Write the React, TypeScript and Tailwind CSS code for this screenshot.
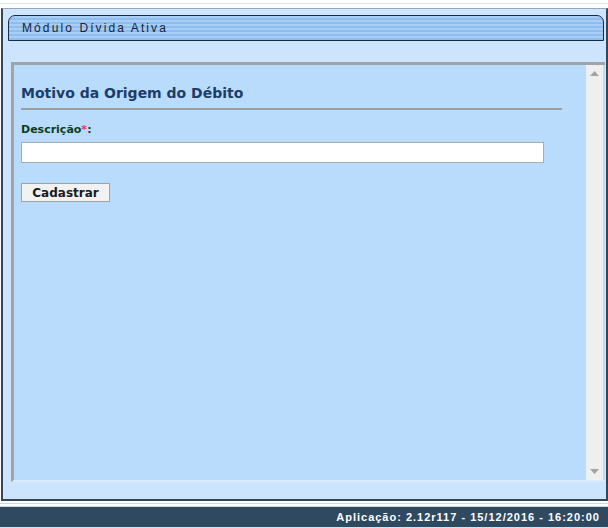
import React from 'react';

const stripes =
  'repeating-linear-gradient(to bottom, #a9cff6 0px, #a9cff6 2px, #8dbcef 2px, #8dbcef 4px)';

const App = () => {
  return (
    <div className="w-[608px] h-[528px] bg-white flex flex-col overflow-hidden font-['DejaVu_Sans',sans-serif]">
      <div className="h-[3px] bg-white" />
      <div className="h-[1px] bg-[#dbe6ee]" />
      <div className="h-[4px] bg-white" />

      {/* main frame */}
      <div className="h-[493px] ml-[1px] border-2 border-[#34475a] border-t-[#9aa7b3] border-t bg-[#cce4fc] flex flex-col">
        {/* module tab */}
        <div
          className="mt-[6px] ml-[5px] mr-[2px] h-[26px] border border-[#1a2a44] rounded-tl-[7px] rounded-tr-[7px] flex items-center pl-[13px]"
          style={{ background: stripes }}
        >
          <span className="text-[12px] tracking-[2.1px] text-[#17233b] font-['Liberation_Sans',sans-serif]">
            Módulo Dívida Ativa
          </span>
        </div>

        {/* content panel */}
        <div className="mt-[21px] ml-[8px] mr-[1px] h-[420px] flex border-t-[3px] border-l-[3px] border-[#9ea4aa] border-b-[2px] border-b-[#dcecfc] bg-[#b9dcfd]">
          <div className="flex-1 pl-[7px] pr-[24px] pt-[18px] flex flex-col">
            <h1 className="text-[14px] font-bold text-[#1c3d6a] leading-[20px]">
              Motivo da Origem do Débito
            </h1>
            <div className="mt-[5px] h-[2px] bg-[#9aa0a6]" />
            <label className="mt-[13px] text-[11px] font-bold text-[#0f3d1c] leading-[14px]">
              Descrição<span className="text-[#e5394a]">*</span>:
            </label>
            <input
              type="text"
              className="mt-[5px] w-[523px] h-[21px] bg-white border border-[#a6acb2] outline-none"
            />
            <button className="mt-[20px] w-[89px] h-[19px] bg-[#f2f2f2] border border-[#9da3a9] text-[12px] font-bold text-[#1b1b1b] leading-[16px]">
              Cadastrar
            </button>
          </div>
          {/* scrollbar */}
          <div className="w-[17px] bg-[#efefef] flex flex-col items-center justify-between py-[6px] mr-[2px]">
            <svg width="9" height="5" viewBox="0 0 9 5">
              <path d="M0 5 L4.5 0 L9 5 Z" fill="#a3a3a3" />
            </svg>
            <svg width="9" height="5" viewBox="0 0 9 5">
              <path d="M0 0 L4.5 5 L9 0 Z" fill="#a3a3a3" />
            </svg>
          </div>
        </div>
      </div>

      <div className="h-[2px] bg-white" />
      <div className="h-[1px] bg-[#c4dcea]" />
      <div className="h-[2px] bg-white" />
      <div className="h-[1px] bg-[#c4dcea]" />
      {/* footer */}
      <div className="flex-1 bg-[#2f4960] flex items-center justify-end pr-[8px] border-b border-[#cfe2f0]">
        <span className="text-[11px] font-bold text-white tracking-[1px] font-['Liberation_Sans',sans-serif]">
          Aplicação: 2.12r117 - 15/12/2016 - 16:20:00
        </span>
      </div>
    </div>
  );
};

export default App;
